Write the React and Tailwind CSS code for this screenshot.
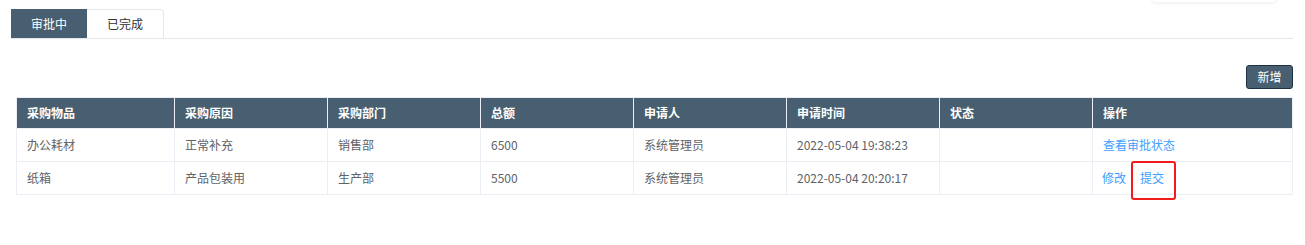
import React from 'react';

const COLS = [
  { key: 'item', label: '采购物品', w: 'w-[158px]' },
  { key: 'reason', label: '采购原因', w: 'w-[153px]' },
  { key: 'dept', label: '采购部门', w: 'w-[153px]' },
  { key: 'total', label: '总额', w: 'w-[153px]' },
  { key: 'user', label: '申请人', w: 'w-[153px]' },
  { key: 'time', label: '申请时间', w: 'w-[153px]' },
  { key: 'status', label: '状态', w: 'w-[153px]' },
  { key: 'op', label: '操作', w: 'w-[200px]' },
];

const ROWS = [
  { id: 1, item: '办公耗材', reason: '正常补充', dept: '销售部', total: '6500', user: '系统管理员', time: '2022-05-04 19:38:23', status: '', submitted: true },
  { id: 2, item: '纸箱', reason: '产品包装用', dept: '生产部', total: '5500', user: '系统管理员', time: '2022-05-04 20:20:17', status: '', submitted: false },
];

export default function App() {
  return (
    <div className="w-[1305px] h-[245px] bg-white relative font-['Noto_Sans_CJK_SC','Liberation_Sans',sans-serif] text-[12px]">
      {/* faint shadow of something above the page */}
      <div className="absolute left-[1152px] top-[-6px] w-[124px] h-[8px] rounded-b bg-white shadow-[0_1px_4px_rgba(0,0,0,0.08)]" />

      <div className="pt-[9px] pl-[11px] pr-[12px]">
        {/* Tabs */}
        <div className="flex border-b border-[#e4e7ed]">
          <div className="w-[76px] h-[29px] flex items-center justify-center bg-[#475f70] text-white">审批中</div>
          <div className="w-[77px] h-[29px] flex items-center justify-center border-t border-r border-[#e4e7ed] rounded-tr text-[#303133]">已完成</div>
        </div>

        <div className="pl-[5px]">
          <div className="flex justify-end mt-[26px] mb-[8px]">
            <button className="w-[47px] h-[24px] rounded-[3px] bg-[#475f70] border border-[#1d3142] text-white text-[12px] leading-none">新增</button>
          </div>

          <table className="table-fixed border-collapse w-[1276px]">
            <thead>
              <tr className="bg-[#475f70]">
                {COLS.map((c) => (
                  <th key={c.key} className={`${c.w} h-[31px] border border-[#ebeef5] px-[10px] text-left font-bold text-white`}>
                    {c.label}
                  </th>
                ))}
              </tr>
            </thead>
            <tbody>
              {ROWS.map((r) => (
                <tr key={r.id}>
                  {COLS.slice(0, 7).map((c) => (
                    <td key={c.key} className="h-[33px] border border-[#ebeef5] px-[10px] text-[#606266]">
                      {r[c.key]}
                    </td>
                  ))}
                  <td className="h-[33px] border border-[#ebeef5] pl-[9px] pr-[10px] text-[#409eff]">
                    {r.submitted ? (
                      <span className="pl-[1px]">查看审批状态</span>
                    ) : (
                      <span className="flex items-center gap-[14px]">
                        <span>修改</span>
                        <span className="relative">
                          提交
                          <span className="absolute left-[-9px] right-[-12px] top-[-8px] bottom-[-13px] border-2 border-[#f21b1b] rounded-[3px]" />
                        </span>
                      </span>
                    )}
                  </td>
                </tr>
              ))}
            </tbody>
          </table>
        </div>
      </div>
    </div>
  );
}
